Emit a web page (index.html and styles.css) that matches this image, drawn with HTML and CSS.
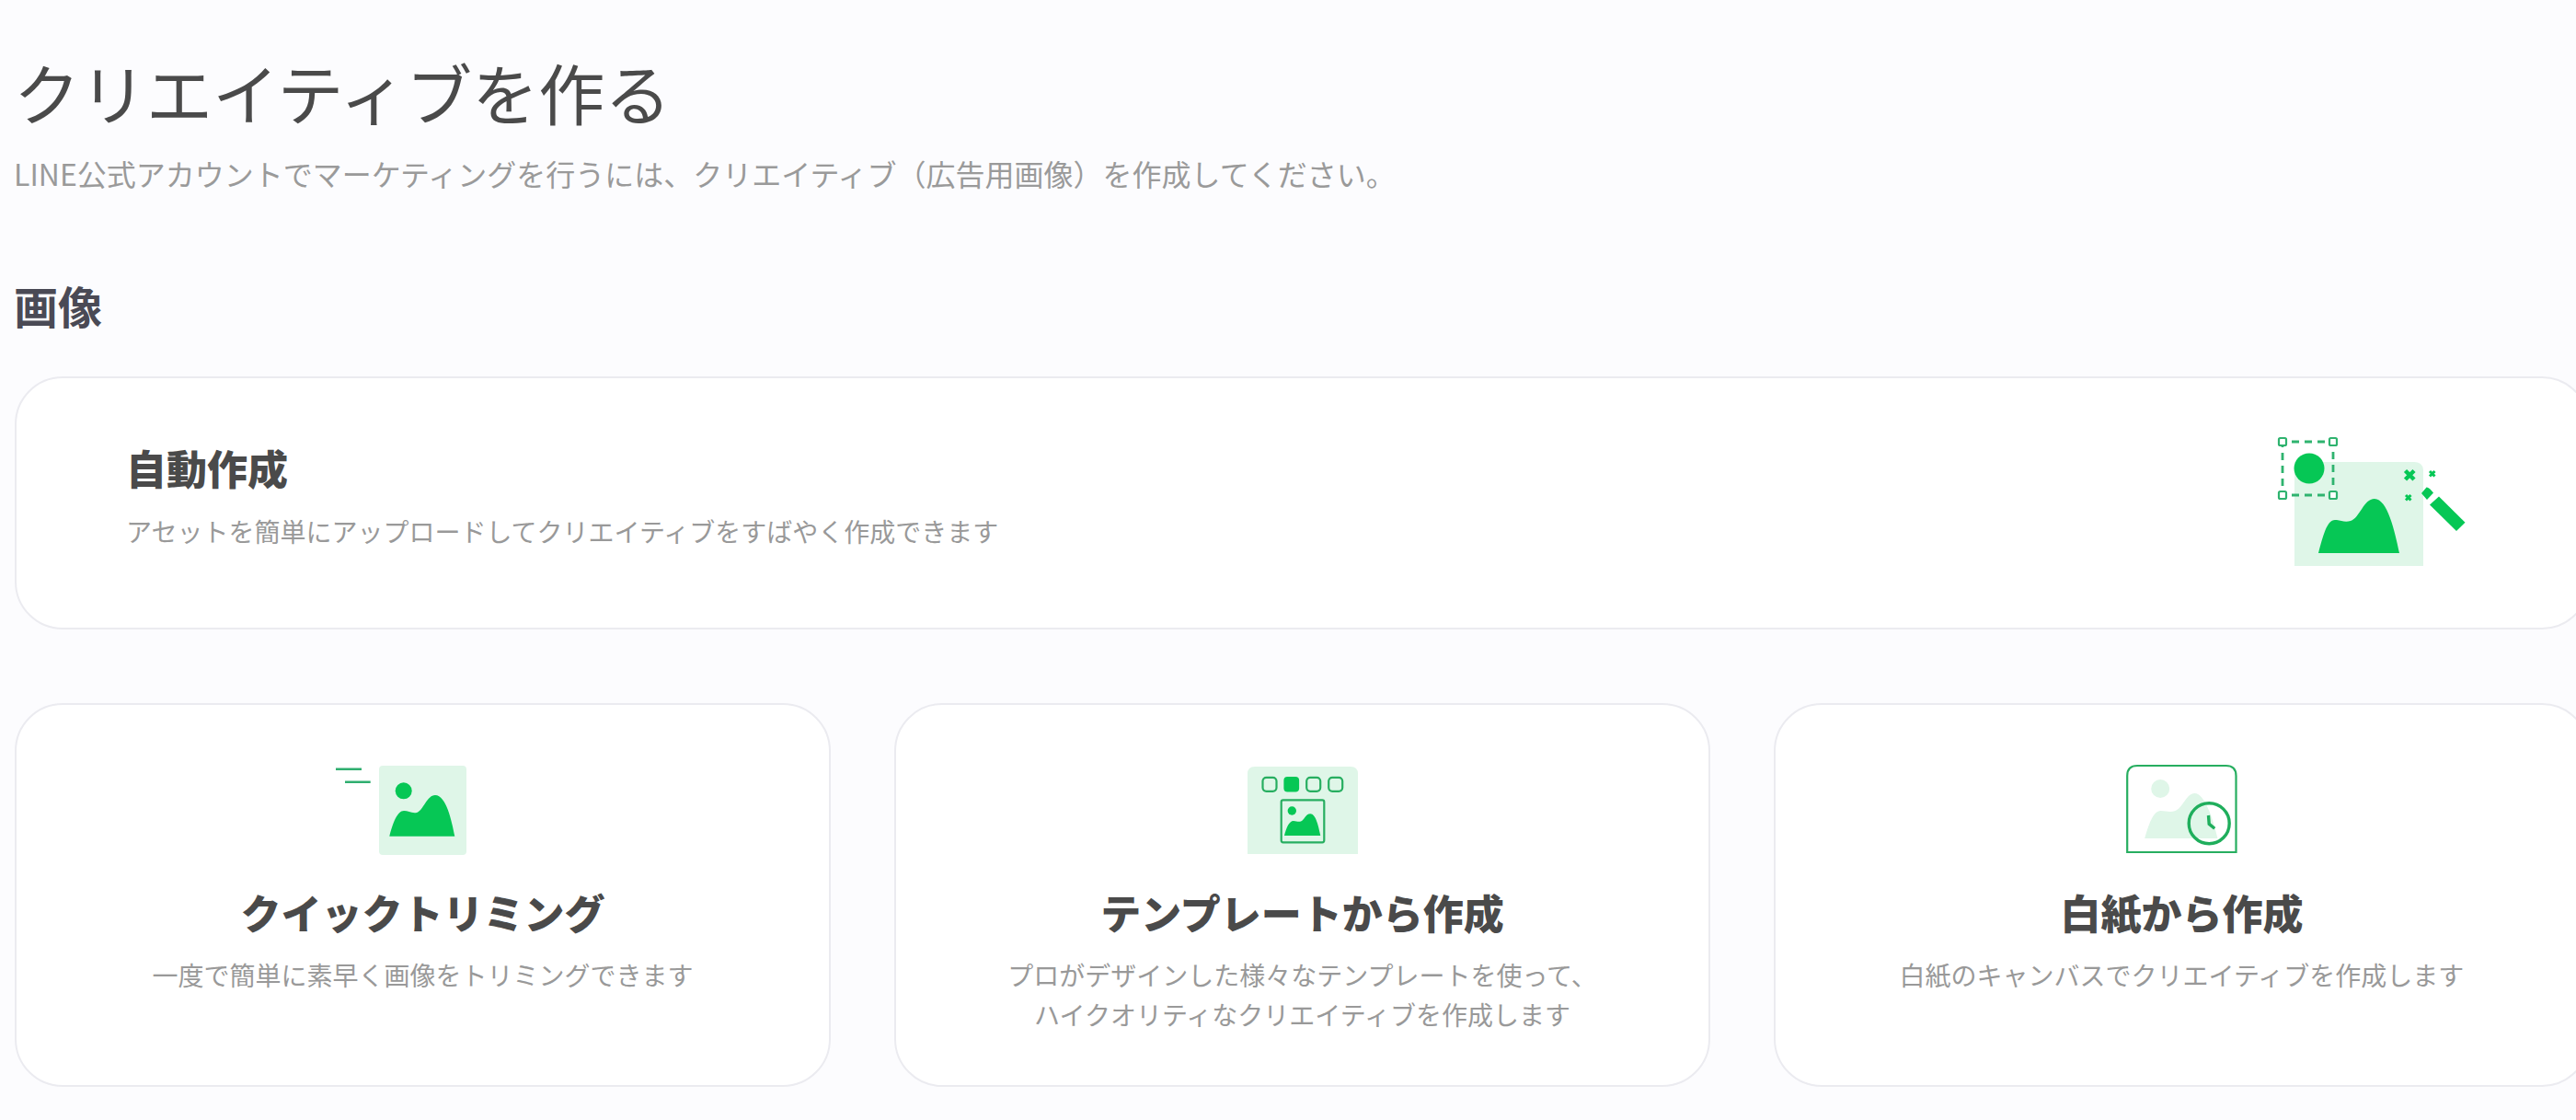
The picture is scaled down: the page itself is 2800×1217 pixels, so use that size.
FILE: index.html
```html
<!DOCTYPE html>
<html lang="ja">
<head>
  <meta charset="utf-8">
  <title>クリエイティブを作る</title>
  <link rel="stylesheet" href="styles.css">
</head>
<body>
  <div class="container">
    <h1>クリエイティブを作る</h1>
    <p class="lead">LINE公式アカウントでマーケティングを行うには、クリエイティブ（広告用画像）を作成してください。</p>

    <h2>画像</h2>

    <div class="card banner">
      <div class="banner-text">
        <h3>自動作成</h3>
        <p>アセットを簡単にアップロードしてクリエイティブをすばやく作成できます</p>
      </div>
      <svg class="banner-icon" width="300" height="190" viewBox="0 0 300 190">
        <path class="light" d="M73 50H203Q213 50 213 60V163H73Z"/>
        <rect class="dash" x="60" y="28" width="55" height="58"/>
        <rect class="handle" x="56" y="24" width="8" height="8" rx="1.500"/>
        <rect class="handle" x="111" y="24" width="8" height="8" rx="1.500"/>
        <rect class="handle" x="56" y="82" width="8" height="8" rx="1.500"/>
        <rect class="handle" x="111" y="82" width="8" height="8" rx="1.500"/>
        <circle class="green" cx="89" cy="57" r="16.500"/>
        <path class="green" d="M99 149C104 131 108 113 117 113C123 113 127 116 134 114C144 111 148 90 160 90C174 90 182 125 187 149Z"/>
        <path class="spark" d="M193.500 59.500L203 69M203 59.500L193.500 69"/>
        <path class="spark thin" d="M220 60L225.500 65.500M225.500 60L220 65.500"/>
        <path class="spark thin" d="M194 86L199.500 91.500M199.500 86L194 91.500"/>
        <path class="green" d="M211 84L216.500 77.500Q219 77 224 83.500L217 91Z"/>
        <path class="green" d="M230 87.500L258.500 115.700L249 125L220 96.500Z"/>
      </svg>
    </div>

    <div class="card-row">
      <div class="card tile">
        <svg width="240" height="130" viewBox="0 0 240 130">
          <path class="line" d="M25 23.700H53M35 37.700H62.700"/>
          <rect class="light" x="72" y="20" width="95" height="97" rx="4"/>
          <circle class="green" cx="98.700" cy="47.300" r="9"/>
          <path class="green" d="M83.300 96.700C87 82 92 69 99 69C104 69 107 72 113 71C120 69 124 52 133 52C145 52 151 80 154.300 96.700Z"/>
        </svg>
        <h3>クイックトリミング</h3>
        <p>一度で簡単に素早く画像をトリミングできます</p>
      </div>

      <div class="card tile">
        <svg width="170" height="130" viewBox="0 0 170 130">
          <path class="light" d="M25 116V29Q25 21 33 21H137Q145 21 145 29V116Z"/>
          <rect class="outline" x="41.500" y="32.800" width="15" height="15" rx="4"/>
          <rect class="green" x="64.400" y="31.900" width="16.700" height="16.700" rx="4"/>
          <rect class="outline" x="89.200" y="32.800" width="15" height="15" rx="4"/>
          <rect class="outline" x="113.200" y="32.800" width="15" height="15" rx="4"/>
          <rect class="outline" x="61.700" y="57.300" width="46.600" height="46" rx="2"/>
          <circle class="green" cx="73.300" cy="69" r="4.700"/>
          <path class="green" d="M65 96C67 88 70 80 75 80C78 80 80 81.500 83 80.500C87 79 88 72.300 93.300 72.300C99 72.300 102 85 104.300 96Z"/>
        </svg>
        <h3>テンプレートから作成</h3>
        <p>プロがデザインした様々なテンプレートを使って、<br>ハイクオリティなクリエイティブを作成します</p>
      </div>

      <div class="card tile">
        <svg width="170" height="130" viewBox="-3.500 0 170 130">
          <path class="outline" d="M21.700 114V31Q21.700 20 32.700 20H129Q140 20 140 31V114Z"/>
          <circle class="light" cx="57.700" cy="45" r="10"/>
          <path class="light" d="M40.700 99C45 84 50 69 58 69C64 69 68 71 74 69C82 66 86 50 95 50C106 50 115 78 120 99Z"/>
          <circle class="clock" cx="110.700" cy="82.700" r="22"/>
          <path class="clock" d="M110 74L110.700 83.300L116.700 88.300"/>
        </svg>
        <h3>白紙から作成</h3>
        <p>白紙のキャンバスでクリエイティブを作成します</p>
      </div>
    </div>
  </div>
</body>
</html>
```

FILE: styles.css
```css
body {
  margin: 0;
  overflow: hidden;
  font-family: "Noto Sans CJK JP", "Noto Sans", sans-serif;
  background-color: #fcfcfe;
  color: #4a4a4a;
}

h1, h2, h3, p {
  margin: 0;
}

.container {
  width: 2799px;
  padding: 56px 0 0 16px;
}

h1 {
  margin-left: -1px;
  font-size: 72px;
  font-weight: 400;
  line-height: 86px;
}

.lead {
  margin-top: 23px;
  margin-left: -1px;
  font-size: 32px;
  line-height: 46px;
  color: #9a9a9a;
}

h2 {
  margin-top: 88px;
  margin-left: -1px;
  font-size: 48px;
  font-weight: 700;
  line-height: 64px;
  color: #4a4a55;
}

.card {
  box-sizing: border-box;
  background-color: #fff;
  border: 2px solid #ebebf0;
  border-radius: 52px;
}

.card h3 {
  font-size: 44px;
  font-weight: 900;
  line-height: 60px;
}

.card p {
  font-size: 28px;
  line-height: 43px;
  color: #999;
}

.banner {
  display: flex;
  justify-content: space-between;
  align-items: center;
  height: 275px;
  margin-top: 46px;
  padding: 0 92px 0 119px;
}

.banner-text {
  margin-bottom: 16px;
}

.banner-text p {
  margin-top: 18px;
}

.card-row {
  display: grid;
  grid-template-columns: repeat(3, 1fr);
  gap: 69px;
  margin-top: 80px;
}

.tile {
  display: flex;
  flex-direction: column;
  align-items: center;
  height: 417px;
  padding-top: 46px;
  text-align: center;
}

.tile h3 {
  margin-top: 19px;
}

.tile p {
  margin-top: 17px;
}

.light {
  fill: #dff6e8;
}

.green {
  fill: #06c755;
}

.line {
  fill: none;
  stroke: #2fae6f;
  stroke-width: 2.400;
}

.dash {
  fill: none;
  stroke: #2fb36f;
  stroke-width: 2.800;
  stroke-dasharray: 8 6;
  stroke-dashoffset: 4;
}

.handle {
  fill: #fff;
  stroke: #2fb36f;
  stroke-width: 2.200;
}

.spark {
  fill: none;
  stroke: #06c755;
  stroke-width: 4.500;
}

.spark.thin {
  stroke-width: 3;
}

.outline {
  fill: none;
  stroke: #27ae60;
  stroke-width: 2.200;
}

.clock {
  fill: none;
  stroke: #1fae5c;
  stroke-width: 3.400;
}
```
